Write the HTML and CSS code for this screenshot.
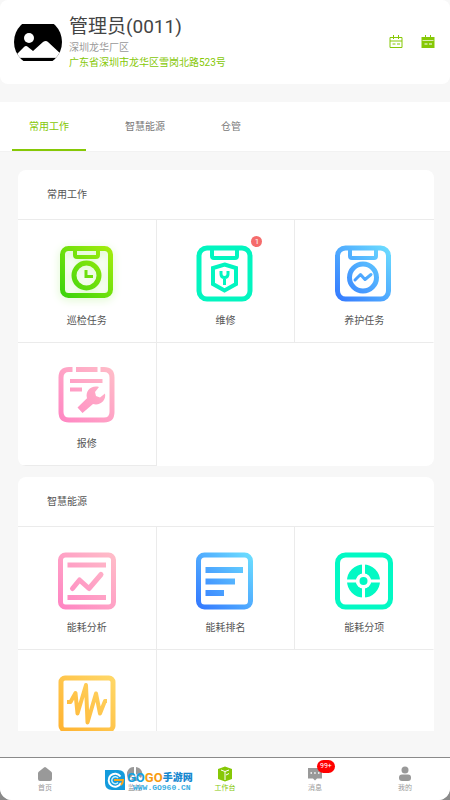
FILE: index.html
```html
<!DOCTYPE html>
<html lang="zh-CN">
<head>
    <meta charset="UTF-8">
    <meta name="viewport" content="width=device-width, initial-scale=1.0">
    <title>工作台</title>
    <link rel="stylesheet" href="styles.css">
</head>
<body>
    <!-- Shared gradients -->
    <svg class="defs" width="0" height="0" aria-hidden="true">
        <defs>
            <linearGradient id="green" gradientUnits="userSpaceOnUse" x1="2" y1="56" x2="56" y2="2"><stop offset="0" stop-color="#35d20c"/><stop offset="1" stop-color="#a8ee0c"/></linearGradient>
            <linearGradient id="blue" gradientUnits="userSpaceOnUse" x1="2" y1="56" x2="56" y2="2"><stop offset="0" stop-color="#3479ff"/><stop offset="1" stop-color="#6de0ff"/></linearGradient>
            <linearGradient id="pink" gradientUnits="userSpaceOnUse" x1="2" y1="56" x2="56" y2="2"><stop offset="0" stop-color="#ff86c3"/><stop offset="1" stop-color="#ffbdc8"/></linearGradient>
            <linearGradient id="yellow" gradientUnits="userSpaceOnUse" x1="2" y1="56" x2="56" y2="2"><stop offset="0" stop-color="#ffb331"/><stop offset="1" stop-color="#ffd868"/></linearGradient>
        </defs>
    </svg>

    <header class="header">
        <svg class="avatar" viewBox="0 0 48 48" role="img" aria-label="头像">
            <defs><clipPath id="round"><circle cx="24" cy="24" r="24"/></clipPath></defs>
            <g clip-path="url(#round)">
                <path d="M0 6h48v37H0z" fill="#000"/>
                <circle cx="15" cy="20" r="5" fill="#fff"/>
                <path d="M0 39 10 29q2-2 4 0l5 4 10-9q3-2 5 0l14 13v2H0z" fill="#fff"/>
                <path d="M0 39h48v1H0z" fill="#ddd"/>
            </g>
        </svg>
        <div class="user">
            <h1 class="user-name">管理员(0011)</h1>
            <p class="user-site">深圳龙华厂区</p>
            <p class="user-address">广东省深圳市龙华区雪岗北路523号</p>
        </div>
        <div class="header-actions">
            <button class="icon-button" type="button" aria-label="日程">
                <svg viewBox="0 0 14 14"><path d="M1 2.500h12v10H1zM1 6h12M4.500 0v4M9.500 0v4" fill="none" stroke="#86c806"/><path d="M3.500 9h3M8 9h3" stroke="#86c806"/></svg>
            </button>
            <button class="icon-button" type="button" aria-label="排班">
                <svg viewBox="0 0 14 14"><path d="M.5 2h13v11H.5z" fill="#86c806"/><path d="M1.500 5.500h11" stroke="#d8efac"/><path d="M4.500 0v4M9.500 0v4" stroke="#86c806"/><path d="M3.500 9h3M8 9h3" stroke="#fff"/></svg>
            </button>
        </div>
    </header>

    <nav class="tabs">
        <a class="tab active" href="#common">常用工作</a>
        <a class="tab" href="#energy">智慧能源</a>
        <a class="tab" href="#store">仓管</a>
    </nav>

    <main class="content">
        <section class="card" id="common">
            <h2 class="card-title">常用工作</h2>
            <div class="grid">
                <a class="cell" href="#">
                    <span class="cell-icon">
                        <svg class="glow" viewBox="0 0 58 58" fill="none" stroke="url(#green)">
                            <rect x="4.500" y="4.500" width="48" height="47" rx="6" stroke-width="5"/>
                            <path d="M17 5v6q0 2 2 2h19q2 0 2-2V5" stroke-width="4"/>
                            <circle cx="28.500" cy="31.500" r="12.500" stroke-width="5"/>
                            <path d="M28 26v6.500h7" stroke-width="3"/>
                        </svg>
                    </span>
                    <span class="cell-label">巡检任务</span>
                </a>
                <a class="cell" href="#">
                    <span class="cell-icon">
                        <svg viewBox="0 0 58 58" fill="none" stroke="#02f5c0">
                            <rect x="3" y="4" width="51" height="51" rx="8" stroke-width="5"/>
                            <path d="M16 5v7q0 2 2 2h21q2 0 2-2V5" stroke-width="4"/>
                            <path d="M28.500 20.500 40 24v16l-11.500 6.500L17 40V24z" stroke-width="4"/>
                            <path d="M25 27v3q0 3.500 3.500 3.500T32 30v-3M28.500 33v8" stroke-width="3"/>
                        </svg>
                        <span class="badge">1</span>
                    </span>
                    <span class="cell-label">维修</span>
                </a>
                <a class="cell" href="#">
                    <span class="cell-icon">
                        <svg viewBox="0 0 58 58" fill="none" stroke="url(#blue)">
                            <rect x="2.500" y="4" width="51" height="51" rx="8" stroke-width="5"/>
                            <path d="M15 5v7q0 2 2 2h22q2 0 2-2V5" stroke-width="4"/>
                            <circle cx="28" cy="33.500" r="13.500" stroke-width="5"/>
                            <path d="m20 36 5.500-5.500 4.500 5 6-5" stroke-width="3" stroke-linecap="round" stroke-linejoin="round"/>
                        </svg>
                    </span>
                    <span class="cell-label">养护任务</span>
                </a>
                <a class="cell" href="#">
                    <span class="cell-icon">
                        <svg viewBox="0 0 58 58" fill="none" stroke="url(#pink)" stroke-width="5">
                            <path d="M14.500 2.500H11q-8 0-8 8V45q0 8 8 8h35q8 0 8-8V10.500q0-8-8-8h-3.500"/>
                            <path d="M18 2.600 39.500 2.500"/>
                            <path d="M12 14.100 44.500 14M12 22.600 24 22.500" stroke-width="4"/>
                            <path d="M19.500 40.500 29 31.200C27 24 33 18 41 20l-4 5 1 4 4 1.500 5-4c1.500 7-5 12.500-12 10.500L24.500 46z" fill="url(#pink)" stroke="none"/>
                        </svg>
                    </span>
                    <span class="cell-label">报修</span>
                </a>
            </div>
        </section>

        <section class="card" id="energy">
            <h2 class="card-title">智慧能源</h2>
            <div class="grid">
                <a class="cell" href="#">
                    <span class="cell-icon">
                        <svg viewBox="0 0 58 58" fill="none" stroke="url(#pink)" stroke-width="5">
                            <rect x="2.500" y="4" width="53" height="52" rx="5"/>
                            <path d="M9.500 14.100 48 14M9.500 46.600 48 46.500"/>
                            <path d="m14.500 37.500 7-8.500 9.500 8.500 12-14" stroke-linecap="round" stroke-linejoin="round"/>
                        </svg>
                    </span>
                    <span class="cell-label">能耗分析</span>
                </a>
                <a class="cell" href="#">
                    <span class="cell-icon">
                        <svg viewBox="0 0 58 58" fill="none" stroke="url(#blue)">
                            <rect x="2.500" y="4" width="52" height="52" rx="6" stroke-width="5"/>
                            <path d="M9.500 16H47v6H9.500zM9.500 27.500H39v6H9.500zM9.500 39H28v6H9.500z" fill="url(#blue)" stroke="none"/>
                        </svg>
                    </span>
                    <span class="cell-label">能耗排名</span>
                </a>
                <a class="cell" href="#">
                    <span class="cell-icon">
                        <svg viewBox="0 0 58 58" fill="none" stroke="#02f9c4">
                            <rect x="2.500" y="4" width="53" height="52" rx="8" stroke-width="5"/>
                            <circle cx="28.500" cy="30" r="12" stroke-width="9"/>
                            <path d="M28.500 12v36M10.500 30h36" stroke="#fff" stroke-width="3"/>
                            <circle cx="28.500" cy="30" r="7.500" fill="#fff" stroke="none"/>
                            <circle cx="28.500" cy="30" r="4" fill="#02f9c4" stroke="none"/>
                        </svg>
                    </span>
                    <span class="cell-label">能耗分项</span>
                </a>
                <a class="cell" href="#" aria-label="能耗监测">
                    <span class="cell-icon">
                        <svg viewBox="0 0 58 58" fill="none" stroke="url(#yellow)">
                            <rect x="3" y="4" width="52" height="52" rx="4" stroke-width="5"/>
                            <path d="M9 28h3.500l5-9 2 20.500L28 11l1.500 37.500L38 19.500l4 20L47 27h2" stroke-width="4" stroke-linejoin="round"/>
                        </svg>
                    </span>
                </a>
            </div>
        </section>
    </main>

    <footer class="tabbar">
        <a class="tabbar-item" href="#">
            <svg viewBox="0 0 16 16"><path d="M7 1.500q1-.8 2 0l5 4q1 .7 1 2V13q0 2-2 2H3q-2 0-2-2V7.500q0-1.300 1-2z"/></svg>
            <span>首页</span>
        </a>
        <a class="tabbar-item" href="#">
            <svg viewBox="0 0 16 16"><path d="M7 1v7l-5 5A7 7 0 0 1 7 1zM9 1a7 7 0 0 1 5 11L9 8zM8 10l4 4q-4 2-8 0z"/></svg>
            <span>监控</span>
        </a>
        <a class="tabbar-item current" href="#">
            <svg viewBox="0 0 16 16"><path d="m8 .5 7 2.500v10L8 15.500 1 13V3z"/><path d="m4 4 4 1.500L12 4M8 5.500V14M9 9l3-1.500" fill="none" stroke="#fff"/></svg>
            <span>工作台</span>
        </a>
        <a class="tabbar-item" href="#">
            <svg viewBox="0 0 16 16"><path d="M1 2h14v10.500H10l-2 2-2-2H1z"/><path d="M3.500 7h1.500M7.200 7h1.500M11 7h1.500" stroke="#fff" stroke-width="1.500"/></svg>
            <span>消息</span>
            <span class="count">99+</span>
        </a>
        <a class="tabbar-item" href="#">
            <svg viewBox="0 0 16 16"><circle cx="8" cy="4" r="3.500"/><rect x="2" y="8.500" width="12" height="6.500" rx="3"/></svg>
            <span>我的</span>
        </a>
        <div class="watermark">
            <svg viewBox="0 0 20 20">
                <path d="M0 0h13q7 0 7 7v13H7q-7 0-7-7z" fill="#139bdc"/>
                <path d="M15.500 6.500A6.500 6.500 0 1 0 16 13" fill="none" stroke="#fff" stroke-width="2"/>
                <path d="M13 8a3.500 3.500 0 1 0 0 4.500" fill="none" stroke="#c8efff" stroke-width="1.500"/>
                <path d="M9 10h9q0 3-2 5" fill="none" stroke="#f8a51c" stroke-width="2"/>
            </svg>
            <div class="watermark-text">
                <div class="watermark-name"><b class="go-blue">GO</b><b class="go-orange">GO</b><b class="go-cn">手游网</b></div>
                <div class="watermark-url">WWW.GO960.CN</div>
            </div>
        </div>
    </footer>
</body>
</html>
```

FILE: styles.css
```css
* {
    box-sizing: border-box;
}
html {
    background: #8a8a8a;
}
body {
    display: flex;
    flex-direction: column;
    height: 100vh;
    margin: 0;
    background: #f7f7f7;
    border-radius: 0 0 12px 12px;
    overflow: hidden;
    font-family: Roboto, "Noto Sans CJK SC", sans-serif;
    font-size: 10px;
    color: #555;
}
a {
    color: inherit;
    text-decoration: none;
}
h1, h2, p {
    margin: 0;
    font-weight: normal;
}
svg {
    display: block;
}
.defs {
    position: absolute;
}
.header {
    display: flex;
    align-items: center;
    flex-shrink: 0;
    height: 84px;
    padding: 0 15px 0 14px;
    background: #fff;
    border-radius: 8px;
}
.avatar {
    width: 48px;
    height: 48px;
    margin-right: 7px;
}
.user {
    flex: 1;
}
.user-name {
    font-size: 19px;
    line-height: 26px;
    color: #444;
}
.user-site {
    line-height: 15px;
    color: #999;
}
.user-address {
    line-height: 15px;
    color: #86c806;
}
.header-actions {
    display: flex;
    gap: 18px;
}
.icon-button {
    padding: 0;
    border: none;
    background: none;
    cursor: pointer;
}
.icon-button svg {
    width: 14px;
    height: 14px;
}
.tabs {
    display: flex;
    flex-shrink: 0;
    gap: 22px;
    height: 50px;
    margin-top: 18px;
    padding: 0 12px;
    background: #fff;
    border-bottom: 1px solid #f2f2f2;
    line-height: 50px;
    color: #777;
}
.tab {
    padding: 0 17px;
}
.tab.active {
    color: #86c806;
    border-bottom: 2px solid #86c806;
}
.content {
    flex: 1;
    min-height: 0;
    margin: 18px 16px 26px 18px;
    overflow: hidden;
}
.card {
    margin-bottom: 11px;
    background: #fff;
    border-radius: 8px;
    overflow: hidden;
}
.card-title {
    height: 50px;
    padding-left: 29px;
    border-bottom: 1px solid #ebebeb;
    font-size: 10px;
    line-height: 50px;
}
.grid {
    display: grid;
    grid-template-columns: repeat(3, 1fr);
}
.cell {
    display: flex;
    flex-direction: column;
    align-items: center;
    gap: 10px;
    height: 123px;
    padding-top: 24px;
    border-right: 1px solid #ebebeb;
    border-bottom: 1px solid #ebebeb;
}
.cell:nth-child(3n) {
    border-right-color: transparent;
}
.cell-icon {
    position: relative;
}
.cell-icon svg {
    width: 58px;
    height: 58px;
    overflow: visible;
}
.glow {
    filter: drop-shadow(0 2px 4px #d8f8c4);
}
.cell-label {
    line-height: 18px;
}
.badge {
    position: absolute;
    top: -8px;
    right: -8px;
    width: 11px;
    height: 11px;
    border-radius: 50%;
    background: #f56c6c;
    color: #fff;
    font-size: 8px;
    line-height: 11px;
    text-align: center;
}
.tabbar {
    position: relative;
    display: flex;
    flex-shrink: 0;
    height: 43px;
    background: #fff;
    border-top: 1px solid #8a8a8a;
}
.tabbar-item {
    position: relative;
    flex: 1;
    display: flex;
    flex-direction: column;
    align-items: center;
    padding-top: 8px;
    font-size: 7px;
    line-height: 12px;
    color: #999;
}
.tabbar-item svg {
    width: 16px;
    height: 16px;
    fill: #999;
}
.tabbar-item.current {
    color: #86c806;
}
.tabbar-item.current svg {
    fill: #86c806;
}
.count {
    position: absolute;
    top: 2px;
    left: 50%;
    margin-left: 2px;
    padding: 0 3px;
    border-radius: 7px;
    background: #f00;
    color: #fff;
    font-size: 7px;
    line-height: 13px;
}
.watermark {
    position: absolute;
    top: 12px;
    left: 105px;
    display: flex;
    gap: 2px;
}
.watermark svg {
    width: 20px;
    height: 20px;
}
.watermark-name {
    display: flex;
    align-items: center;
    height: 15px;
    font-size: 13px;
    line-height: 15px;
}
.go-blue {
    color: #129fe0;
}
.go-orange {
    color: #f89b12;
}
.go-cn {
    font-size: 10px;
    font-weight: 900;
    color: #1688cf;
}
.watermark-url {
    padding-left: 6px;
    font-family: "Liberation Mono", monospace;
    font-size: 8px;
    font-weight: bold;
    line-height: 6px;
    color: #3aaee2;
}
```
